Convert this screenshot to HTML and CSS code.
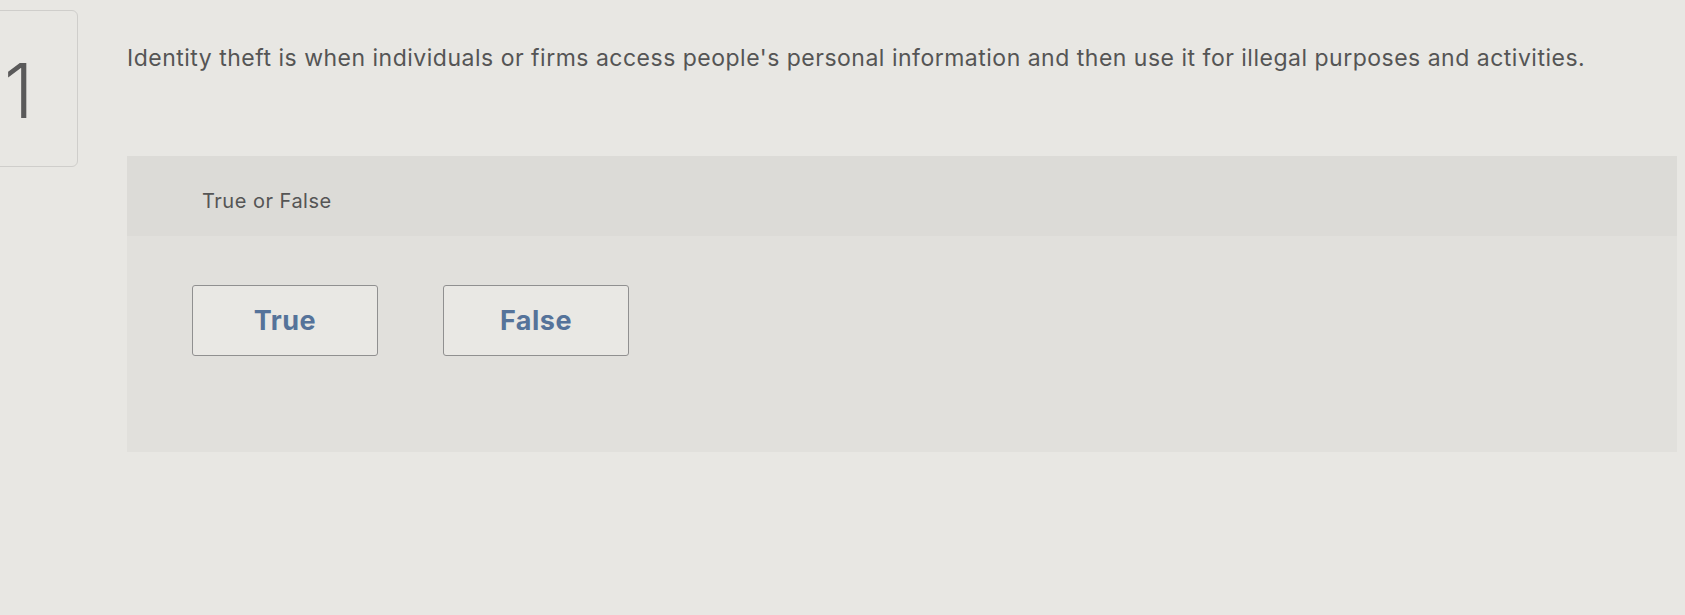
FILE: index.html
```html
<!DOCTYPE html>
<html lang="en">
<head>
    <meta charset="UTF-8">
    <meta name="viewport" content="width=device-width, initial-scale=1.0">
    <title>Question 1</title>
    <link rel="stylesheet" href="styles.css">
</head>
<body>
    <div class="question">
        <div class="number">1</div>

        <div class="content">
            <div class="prompt">
                Identity theft is when individuals or firms access people's personal information and then use it for illegal purposes and activities.
            </div>

            <div class="panel">
                <div class="panelHeader">True or False</div>
                <div class="choices">
                    <button type="button" class="choice">True</button>
                    <button type="button" class="choice">False</button>
                </div>
            </div>
        </div>
    </div>
</body>
</html>
```

FILE: styles.css
```css
body {
    font-family: Inter, Lato, Arial, sans-serif;
    margin: 0;
    padding: 0;
    background-color: #e8e7e3;
    color: #555;
    overflow: hidden;
}
.question {
    display: flex;
    align-items: flex-start;
}
.number {
    box-sizing: border-box;
    width: 84px;
    height: 157px;
    margin-top: 10px;
    margin-left: -6px;
    padding-left: 9px;
    padding-top: 42px;
    border: 1px solid #cfcecb;
    border-radius: 6px;
    font-size: 75px;
    font-weight: 350;
    line-height: 1;
    color: #5a5a5a;
}
.content {
    flex: 1;
    margin-left: 49px;
    margin-right: 8px;
    padding-top: 43px;
}
.prompt {
    font-size: 23px;
    line-height: 30px;
    letter-spacing: 0.5px;
    white-space: nowrap;
}
.panel {
    margin-top: 83px;
    background-color: #e1e0dc;
    height: 296px;
}
.panelHeader {
    box-sizing: border-box;
    height: 80px;
    padding-top: 33px;
    padding-left: 75px;
    font-size: 20px;
    line-height: 24px;
    letter-spacing: 0.5px;
    background-color: #dcdbd7;
}
.choices {
    display: flex;
    gap: 65px;
    padding-top: 49px;
    padding-left: 65px;
}
.choice {
    box-sizing: border-box;
    width: 186px;
    height: 71px;
    background-color: #e9e8e4;
    border: 1px solid #909090;
    border-radius: 3px;
    font-family: Inter, Lato, Arial, sans-serif;
    font-size: 27px;
    font-weight: bold;
    letter-spacing: 0.5px;
    color: #55739a;
    display: flex;
    align-items: center;
    justify-content: center;
}
```
